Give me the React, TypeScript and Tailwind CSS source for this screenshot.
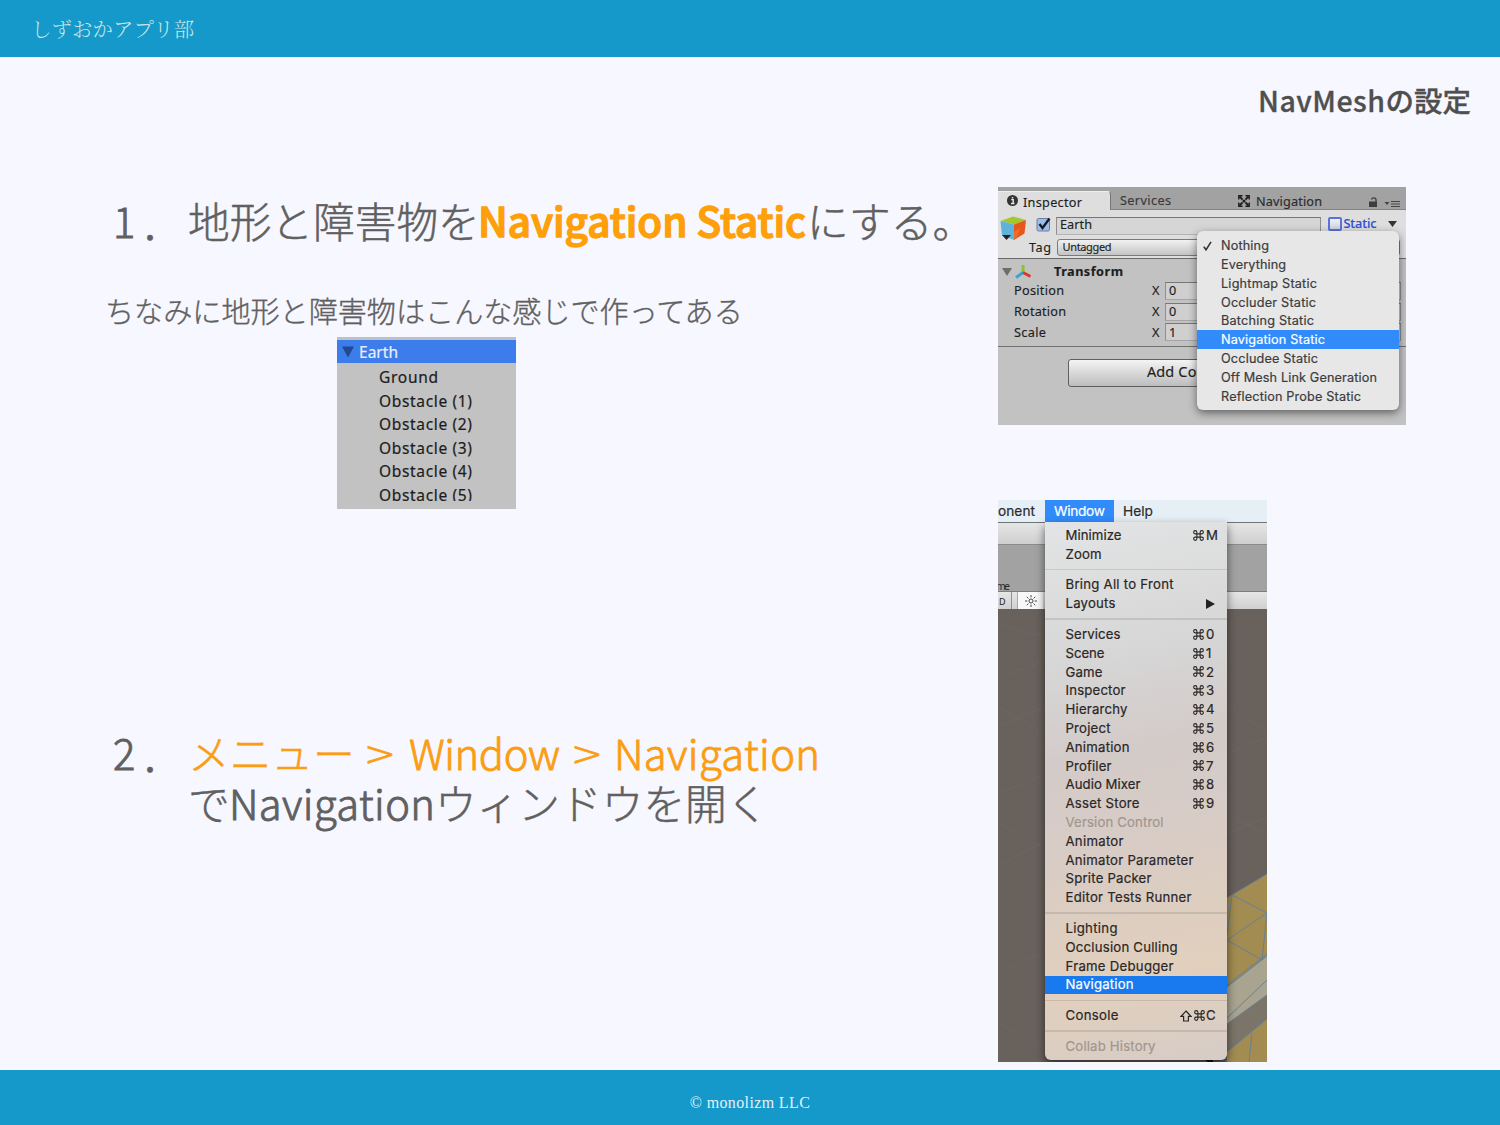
import { useLayoutEffect, useRef, useState } from "react";
import type { ReactNode } from "react";

const LATIN = "font-['Noto_Sans','Open_Sans',sans-serif] font-normal";
const MENU = "font-['Inter',sans-serif] font-normal";

/** A single line of text whose tracking is computed so that it spans `w` pixels. */
function Fit({ w, className = "", children }: { w: number; className?: string; children: string }) {
  const ref = useRef<HTMLSpanElement>(null);
  const [spacing, setSpacing] = useState(0);
  useLayoutEffect(() => {
    const el = ref.current;
    if (!el) return;
    el.style.letterSpacing = "0px";
    const natural = el.getBoundingClientRect().width;
    const s = (w - natural) / Math.max(1, children.length - 1);
    el.style.letterSpacing = `${s}px`;
    setSpacing(s);
  }, [w, children]);
  return (
    <span ref={ref} className={`inline-block whitespace-pre ${className}`} style={{ letterSpacing: spacing }}>
      {children}
    </span>
  );
}

function Hierarchy() {
  const rows: [string, number][] = [
    ["Ground", 59],
    ["Obstacle (1)", 93],
    ["Obstacle (2)", 93],
    ["Obstacle (3)", 93],
    ["Obstacle (4)", 93],
  ];
  return (
    <div className={`flex h-[172px] w-[179px] flex-col overflow-hidden bg-[#c2c2c2] text-[15.5px] text-[#1c1c1c] [-webkit-text-stroke:0.2px_currentColor] ${LATIN}`}>
      <div className="h-[3px] shrink-0 bg-[#bcc0c8]" />
      <div className="flex h-[23px] shrink-0 items-center bg-[#3d7deb] pt-[3px] pl-[5px] text-[#e8effc]">
        <svg className="mr-[5px] mb-0.5 h-3 w-3" viewBox="0 0 12 12">
          <path d="M0 0.5H12L6 11.5Z" fill="#1f4a94" />
        </svg>
        <Fit w={39}>Earth</Fit>
      </div>
      <div className="h-[3px] shrink-0" />
      {rows.map(([name, w]) => (
        <div key={name} className="flex h-[23.5px] shrink-0 items-center pl-[42px]">
          <Fit w={w}>{name}</Fit>
        </div>
      ))}
      <div className="flex h-[17px] shrink-0 items-start overflow-hidden pl-[42px]">
        <Fit w={93} className="leading-[22.5px]">Obstacle (5)</Fit>
      </div>
    </div>
  );
}

const staticItems: [string, number][] = [
  ["Nothing", 48],
  ["Everything", 65],
  ["Lightmap Static", 96],
  ["Occluder Static", 95],
  ["Batching Static", 93],
  ["Navigation Static", 104],
  ["Occludee Static", 97],
  ["Off Mesh Link Generation", 156],
  ["Reflection Probe Static", 140],
];

function StaticMenu() {
  return (
    <div className={`absolute top-[44px] left-[199px] h-[179px] w-[202px] rounded-md bg-[#e7e7e7] pt-[5px] text-[12.7px] text-[#3c3c3c] shadow-[0_3px_9px_rgba(0,0,0,0.5)] [-webkit-text-stroke:0.2px_currentColor] ${MENU}`}>
      {staticItems.map(([name, w]) => (
        <div
          key={name}
          className={`flex h-[18.8px] items-center pt-[0.8px] pl-1.5 ${name === "Navigation Static" ? "bg-[#318bfb] text-white" : ""}`}
        >
          <span className="w-[18px]">
            {name === "Nothing" && (
              <svg className="h-[10px] w-[9px]" viewBox="0 0 9 10" fill="none" stroke="#333" strokeWidth="1.6">
                <path d="M0.8 5.6L3 8.8L8 0.8" />
              </svg>
            )}
          </span>
          <Fit w={w}>{name}</Fit>
        </div>
      ))}
    </div>
  );
}

function AxisRow({ label, w, value }: { label: string; w: number; value: string }) {
  return (
    <div className="flex h-[20.8px] items-center pt-px pl-4">
      <div className="w-[138px]"><Fit w={w}>{label}</Fit></div>
      <div className="w-[13px]">X</div>
      <div className="flex h-[18px] w-[236px] items-center border border-t-[#777] border-r-[#8f8f8f] border-b-[#a5a5a5] border-l-[#8f8f8f] bg-[#cfcfcf] pl-[3px]">{value}</div>
    </div>
  );
}

function Inspector() {
  return (
    <div className={`relative flex h-[238px] w-[408px] flex-col overflow-hidden bg-[#c2c2c2] text-[12.7px] text-[#1e1e1e] [-webkit-text-stroke:0.15px_currentColor] ${LATIN}`}>
      <div className="flex h-[23px] shrink-0 items-end border-b border-[#858585] bg-[#a2a2a2]">
        <div className="-mb-px flex h-[19px] w-[113px] items-center rounded-tr-sm border-t border-r border-t-[#eee] border-r-[#777] bg-[#dedede] pt-[3px] pl-[9px]">
          <svg className="mr-[5px] mb-1 h-[11px] w-[11px]" viewBox="0 0 11 11">
            <circle cx="5.5" cy="5.5" r="5.5" fill="#333" />
            <path d="M4.2 4.6H6.2V8.4M4 8.5H7.4M5.5 2V3.6" stroke="#e8e8e8" strokeWidth="1.4" fill="none" />
          </svg>
          <Fit w={59}>Inspector</Fit>
        </div>
        <div className="flex h-[19px] w-[127px] items-center pt-[3px] pl-[9px] text-[#3a3a3a]"><Fit w={51}>Services</Fit></div>
        <div className="flex h-[19px] flex-1 items-center pt-1 text-[#2c2c2c]">
          <svg className="mr-[6px] mb-0.5 h-3 w-3" viewBox="0 0 12 12" fill="none" stroke="#1d1d1d">
            <path d="M1.5 1.5L4.6 4.6M10.5 10.5L7.4 7.4M10.5 1.5L7.4 4.6M1.5 10.5L4.6 7.4" strokeWidth="1.8" />
            <path d="M0.8 4.5V0.8H4.5M7.5 0.8H11.2V4.5M11.2 7.5V11.2H7.5M4.5 11.2H0.8V7.5" strokeWidth="1.4" />
            <circle cx="6" cy="6" r="1.5" fill="#1d1d1d" stroke="none" />
          </svg>
          <Fit w={66}>Navigation</Fit>
        </div>
        <svg className="mr-[5px] mb-px h-[11px] w-8" viewBox="0 0 32 11">
          <path d="M0 4.5H8V10H0Z" fill="#3d3d3d" />
          <path d="M2.5 2.5C3 0.5 7 0.2 7 3V5" fill="none" stroke="#3d3d3d" strokeWidth="1.3" />
          <path d="M15.5 5H20.5L18 8Z" fill="#444" />
          <path d="M22 4.5H31M22 7H31M22 9.5H31" stroke="#444" strokeWidth="1.2" />
        </svg>
      </div>

      <div className="flex h-[49px] shrink-0 border-b border-[#6a6a6a] bg-[#dedede]">
        <svg className="mt-[5px] ml-0.5 h-7 w-7" viewBox="0 0 28 28">
          <path d="M0.5 6L13 1.5L26 5L14 9.5Z" fill="#a4c62e" />
          <path d="M0.5 6L14 9.5V25L2 20.5Z" fill="#5fb2da" />
          <path d="M14 9.5L26 5L24.5 18.5L14 25Z" fill="#e8561c" />
          <path d="M14 17L20 13L17 22L14 24Z" fill="#ec6e28" />
          <path d="M2 20H11L6.5 25Z" fill="#222" />
        </svg>
        <div className="flex flex-1 flex-col">
          <div className="flex h-[27px] items-center pt-1 pl-[8px]">
            <svg className="mr-[5px] mb-[3px] h-[15px] w-[15px]" viewBox="0 0 15 15">
              <rect x="1" y="1.5" width="12.5" height="12.5" rx="1.5" fill="#9dbce6" stroke="#6b7f9f" />
              <path d="M3.5 7L6.5 11L13.5 1.5" fill="none" stroke="#101a2c" strokeWidth="2.3" />
            </svg>
            <div className="flex h-[18px] w-[265px] items-center border border-t-[#777] border-r-[#8f8f8f] border-b-[#b5b5b5] border-l-[#8f8f8f] bg-[#d6d6d6] pb-px pl-[3px]">
              <Fit w={32}>Earth</Fit>
            </div>
            <div className="mr-[2px] mb-[3px] ml-[7px] h-[13.5px] w-[13.5px] rounded-[2px] border-2 border-[#5a72dc] bg-linear-to-b from-[#f0f0f6] to-[#cfd2e0]" />
            <Fit w={33} className="mb-[3px] font-medium text-[#2f4fd6]">Static</Fit>
            <svg className="mb-[3px] ml-3 h-1.5 w-[9px]" viewBox="0 0 9 6"><path d="M0 0H9L4.5 6Z" fill="#333" /></svg>
          </div>
          <div className="flex h-[21px] items-center">
            <Fit w={22} className="mr-[5px] ml-px">Tag</Fit>
            <div className="flex h-[17px] w-[343px] items-center rounded-[3px] border border-[#7a7a7a] bg-linear-to-b from-[#f2f2f2] to-[#c4c4c4] pb-px pl-[5px] text-[11px]">
              <Fit w={49}>Untagged</Fit>
            </div>
          </div>
        </div>
      </div>

      <div className="flex h-[21px] shrink-0 items-center pt-[5px] pl-[4px]">
        <svg className="mr-[3px] mb-px h-2 w-[10px]" viewBox="0 0 10 8"><path d="M0 0H10L5 8Z" fill="#6d6d6d" /></svg>
        <svg className="mb-0.5 h-[15px] w-[17px]" viewBox="0 0 17 15">
          <path d="M8 9V1" stroke="#8bc528" strokeWidth="3" />
          <path d="M8 8.5L1 13.5" stroke="#3aa4cf" strokeWidth="3" />
          <path d="M8 8.5L15.5 12.5" stroke="#d83a26" strokeWidth="3" />
        </svg>
        <Fit w={69} className="ml-[22px] font-bold">Transform</Fit>
      </div>
      <div className="h-[67px] shrink-0 border-b border-[#6f6f6f]">
        <AxisRow label="Position" w={50} value="0" />
        <AxisRow label="Rotation" w={52} value="0" />
        <AxisRow label="Scale" w={32} value="1" />
      </div>
      <div className="mt-[12px] ml-[70px] flex h-[28px] w-[268px] items-center justify-center rounded-[3px] border border-[#5f5f5f] bg-linear-to-b from-[#f4f4f4] to-[#bdbdbd] pb-0.5 pl-[3px] text-[14.5px]">
        <Fit w={113}>Add Component</Fit>
      </div>
      <StaticMenu />
    </div>
  );
}

type Entry = { name: string; w: number; key?: string; disabled?: boolean; active?: boolean; arrow?: boolean };

const groups: Entry[][] = [
  [
    { name: "Minimize", w: 56, key: "M" },
    { name: "Zoom", w: 36 },
  ],
  [
    { name: "Bring All to Front", w: 108 },
    { name: "Layouts", w: 50, arrow: true },
  ],
  [
    { name: "Services", w: 55, key: "0" },
    { name: "Scene", w: 39, key: "1" },
    { name: "Game", w: 37, key: "2" },
    { name: "Inspector", w: 60, key: "3" },
    { name: "Hierarchy", w: 62, key: "4" },
    { name: "Project", w: 45, key: "5" },
    { name: "Animation", w: 64, key: "6" },
    { name: "Profiler", w: 46, key: "7" },
    { name: "Audio Mixer", w: 75, key: "8" },
    { name: "Asset Store", w: 74, key: "9" },
    { name: "Version Control", w: 98, disabled: true },
    { name: "Animator", w: 58 },
    { name: "Animator Parameter", w: 128 },
    { name: "Sprite Packer", w: 86 },
    { name: "Editor Tests Runner", w: 126 },
  ],
  [
    { name: "Lighting", w: 52 },
    { name: "Occlusion Culling", w: 112 },
    { name: "Frame Debugger", w: 108 },
    { name: "Navigation", w: 68, active: true },
  ],
  [{ name: "Console", w: 53, key: "C" }],
  [{ name: "Collab History", w: 90, disabled: true }],
];

function Command() {
  return (
    <svg className="mb-px h-[13px] w-[13px]" viewBox="0 0 24 24" fill="none" stroke="currentColor" strokeWidth="2">
      <path d="M15 6v12a3 3 0 1 0 3-3H6a3 3 0 1 0 3 3V6a3 3 0 1 0-3 3h12a3 3 0 1 0-3-3" />
    </svg>
  );
}

function WindowDropdown() {
  return (
    <div className={`absolute top-[22px] left-[47px] h-[538px] w-[182px] rounded-b-md bg-linear-[168deg,#e3e4e5_0%,#d6d6d6_26%,#d3cbc9_42%,#d9ccc4_62%,#e2d0bd_82%,#d6ccc6_100%] pt-[4px] text-[13.2px] text-[#2a2625] shadow-[0_4px_10px_rgba(0,0,0,0.55)] [-webkit-text-stroke:0.2px_currentColor] ${MENU}`}>
      {groups.map((group, i) => (
        <div key={i}>
          {i > 0 && (
            <div className="flex h-[12px] items-center"><div className="h-[1.5px] w-full bg-black/10" /></div>
          )}
          {group.map((e) => (
            <div
              key={e.name}
              className={`flex h-[18.8px] items-center pt-[0.6px] pl-[20.5px] ${e.active ? "bg-[#187aee] text-white" : e.disabled ? "text-[#a1968f]" : ""}`}
            >
              <Fit w={e.w}>{e.name}</Fit>
              {e.arrow && (
                <svg className="mr-[12px] ml-auto h-[10px] w-[9px]" viewBox="0 0 9 10"><path d="M0 0L9 5L0 10Z" fill="#222" /></svg>
              )}
              {e.key && (
                <span className="mr-[9px] ml-auto flex items-center">
                  {e.key === "C" && (
                    <svg className="mr-px h-3 w-3" viewBox="0 0 12 12" fill="none" stroke="currentColor" strokeWidth="1.2">
                      <path d="M6 1L11 6.3H8.4V11H3.6V6.3H1Z" />
                    </svg>
                  )}
                  <Command />
                  <span className={e.key === "C" ? "w-[12px]" : "w-[13px] pl-px"}>{e.key}</span>
                </span>
              )}
            </div>
          ))}
        </div>
      ))}
    </div>
  );
}

function Scene() {
  return (
    <svg className="block h-[453px] w-[269px]" viewBox="0 0 269 453">
      <rect width="269" height="453" fill="#69615c" />
      <g stroke="#706963" strokeWidth="0.7" fill="none">
        <path d="M0 15L47 28M0 68L47 52M0 97L47 125M0 117L47 98M0 185L47 165M0 214L47 240M0 257L47 232M0 365L47 342M0 414L47 440M229 98L269 122M229 145L269 128M229 206L269 226M229 225L269 208" />
      </g>
      <path d="M229 289L269 265V453H229Z" fill="#a28c52" />
      <path d="M229 378L269 347V386L229 415Z" fill="#a8a48f" />
      <path d="M229 415L269 386V410L229 443Z" fill="#7b7569" />
      <path d="M207 451H215V453H210Z" fill="#111" />
      <g stroke="#66809a" strokeWidth="1" fill="none">
        <path d="M229 289L269 265M234 286L269 304L229 331L264 351L269 304M234 286L229 326M229 378L269 347M229 376L269 345M229 409L269 371M229 415L269 386M229 443L269 410M254 424L251 453" />
      </g>
    </svg>
  );
}

function WindowMenu() {
  return (
    <div className="relative flex h-[562px] w-[269px] flex-col overflow-hidden bg-[#a2a2a2]">
      <div className={`flex h-[22px] shrink-0 items-center bg-[#e7eff6] text-[13.7px] text-[#2b2b2b] [-webkit-text-stroke:0.2px_currentColor] ${MENU}`}>
        <div className="flex w-[47px]"><Fit w={37}>onent</Fit></div>
        <div className="flex h-full w-[69px] items-center bg-[#318bfb] pl-[9px] text-white"><Fit w={51}>Window</Fit></div>
        <div className="pl-[9px]"><Fit w={30}>Help</Fit></div>
      </div>
      <div className="h-[22px] shrink-0 border-t border-[#6e7378] bg-linear-to-b from-[#e6e6e6] to-[#cfcfcf]" />
      <div className={`flex h-[48px] shrink-0 items-end border-t border-b border-t-[#8b8b8b] border-b-[#7e7e7e] text-[10.5px] leading-[10px] text-[#2b2b2b] ${LATIN}`}>
        <Fit w={14} className="-ml-[2px]">me</Fit>
      </div>
      <div className={`flex h-[17px] shrink-0 items-center bg-linear-to-b from-[#e6e6e6] to-[#d0d0d0] text-[9px] text-[#222] ${LATIN}`}>
        <div className="h-full w-[14px] border-r border-[#909090] pt-[3px] pl-[1px]">D</div>
        <div className="ml-[5px] flex h-full w-[26px] items-center justify-center border-l border-[#aaa] bg-[#f8f8f8]">
          <svg className="h-[12px] w-[12px]" viewBox="0 0 12 12" fill="none" stroke="#333" strokeWidth="0.9">
            <circle cx="6" cy="6" r="2" />
            <path d="M6 0V2.4M6 9.6V12M0 6H2.4M9.6 6H12M1.8 1.8L3.4 3.4M8.6 8.6L10.2 10.2M1.8 10.2L3.4 8.6M8.6 3.4L10.2 1.8" />
          </svg>
        </div>
      </div>
      <Scene />
      <WindowDropdown />
    </div>
  );
}

function Chevron({ className }: { className: string }) {
  return (
    <span className={className}>
      <span className="inline-block origin-left scale-x-125">&gt;</span>
    </span>
  );
}

function Step({ n, children }: { n: string; children: ReactNode }) {
  return (
    <div className="flex text-[41.7px] leading-[50px] whitespace-nowrap text-[#606060] [-webkit-text-stroke:0.5px_currentColor]">
      <div className="flex w-[76px] shrink-0">
        <span className="inline-block w-[29px] pl-px [-webkit-text-stroke:0.9px_currentColor]">{n}</span>
        <span className="pt-0.5">．</span>
      </div>
      <div>{children}</div>
    </div>
  );
}

export default function App() {
  return (
    <div className="flex h-[1125px] w-[1500px] flex-col overflow-hidden bg-[#f7f7ff] font-['Noto_Sans_CJK_JP',sans-serif] font-light">
      <header className="flex h-[57px] shrink-0 items-center bg-[#1598ca] pl-[31px] text-[20.5px] text-[#c4e6e6]">
        <span className="font-['Noto_Serif_CJK_JP','Noto_Sans_CJK_JP',serif] font-light">しずおかアプリ部</span>
      </header>

      <main className="flex h-[1013px] shrink-0 flex-col">
        <div className="flex h-[86px] items-center justify-end pr-[29px] text-[28.5px] font-medium text-[#4f4f4f] [-webkit-text-stroke:0.3px_currentColor]">
          <Fit w={127}>NavMesh</Fit>
          <span>の設定</span>
        </div>
        <div className="flex">
          <section className="flex w-[998px] flex-col pt-[52px]">
            <div className="h-[50px] pl-[112px]">
              <Step n="1">
                <div className="flex">
                  <span className="w-[290px]">地形と障害物を</span>
                  <Fit w={328} className="text-[40.5px] font-medium text-[#ff9f0a] [-webkit-text-stroke:1.4px_currentColor]">Navigation Static</Fit>
                  <span className="ml-px">にする。</span>
                </div>
              </Step>
            </div>
            <p className="mt-[44px] pl-[105px] text-[29.1px] leading-[42px] text-[#606060] [-webkit-text-stroke:0.35px_currentColor]">ちなみに地形と障害物はこんな感じで作ってある</p>
            <div className="mt-[6px] ml-[337px]"><Hierarchy /></div>
            <div className="mt-[218px] pl-[112px]">
              <Step n="2">
                <div className="flex text-[#fb9d13]">
                  <span className="w-[178px]">メニュー</span>
                  <Chevron className="w-[43px]" />
                  <span className="w-[164px] [-webkit-text-stroke:0.9px_currentColor]"><Fit w={151}>Window</Fit></span>
                  <Chevron className="w-[41px]" />
                  <Fit w={206} className="[-webkit-text-stroke:0.9px_currentColor]">Navigation</Fit>
                </div>
                <div className="flex">
                  <span className="w-[41px]">で</span>
                  <span className="w-[206px] [-webkit-text-stroke:0.9px_currentColor]"><Fit w={206}>Navigation</Fit></span>
                  <span>ウィンドウを開く</span>
                </div>
              </Step>
            </div>
          </section>
          <aside className="flex flex-col gap-[75px] pt-[44px]">
            <Inspector />
            <WindowMenu />
          </aside>
        </div>
      </main>

      <footer className="flex flex-1 items-center justify-center bg-[#1598ca] pt-2.5 font-['Liberation_Serif',serif] text-[16px] font-normal text-[#e2f2f8]">
        <Fit w={120}>© monolizm LLC</Fit>
      </footer>
    </div>
  );
}
